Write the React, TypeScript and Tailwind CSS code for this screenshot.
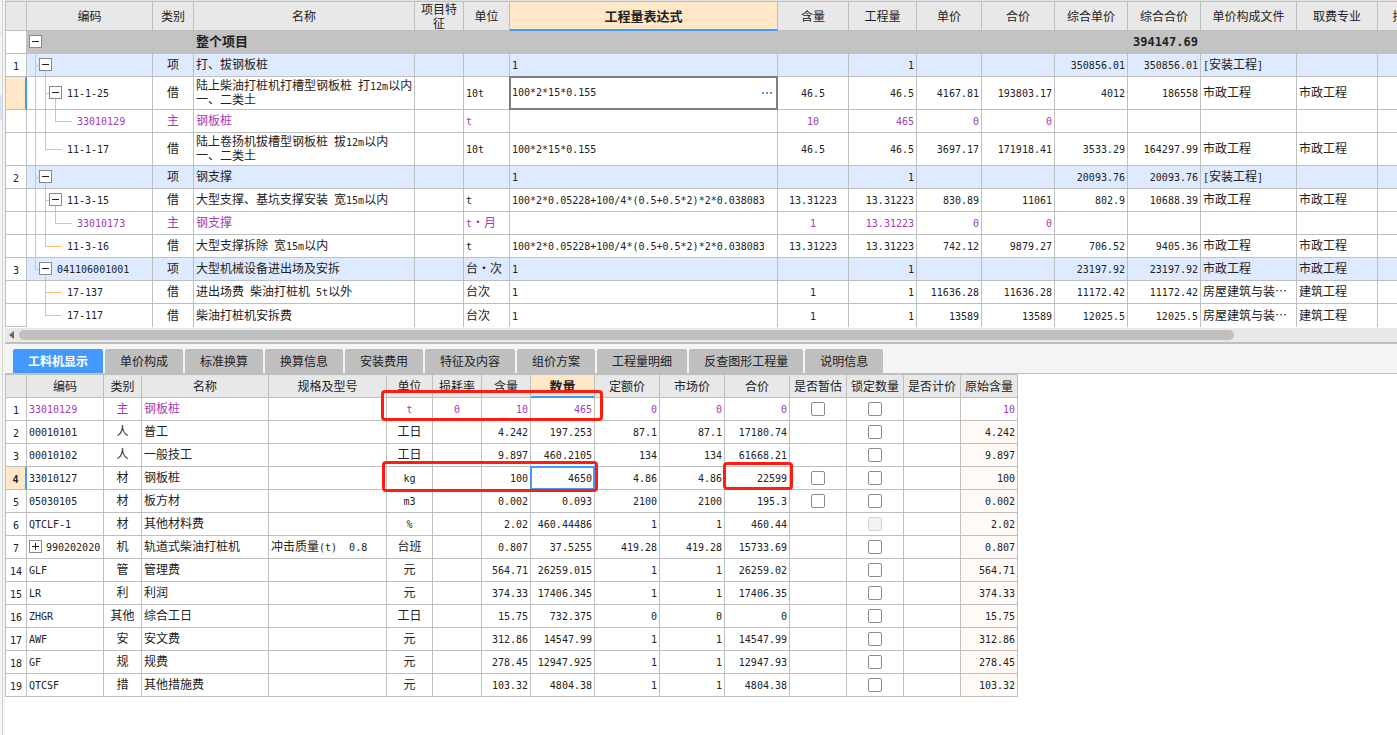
import React from 'react';
import clsx from 'clsx';

interface Column {
  title: string;
  width: string;
  align: string;
  wrap?: boolean;
  active?: boolean;
}

type Guide = 'pass' | 'tee' | 'elbow' | 'none';

interface BudgetRow {
  no: string;
  guides: Guide[];
  open?: boolean;
  code: string;
  kind?: 'root' | 'item' | 'main';
  tall?: boolean;
  current?: boolean;
  // One entry for each column after the code column
  cells: string[];
}

interface ResourceRow {
  no: string;
  code: string;
  main?: boolean;
  current?: boolean;
  expandable?: boolean;
  cells: string[];
  estimate?: boolean;
  lock: 'on' | 'disabled';
  original: string;
}

const budgetColumns: Column[] = [
  { title: '', width: 'w-[21px]', align: 'text-center' },
  { title: '编码', width: 'w-[126px]', align: 'text-left' },
  { title: '类别', width: 'w-[41px]', align: 'text-center' },
  { title: '名称', width: 'w-[221px]', align: 'text-left', wrap: true },
  { title: '项目特征', width: 'w-[49px]', align: 'text-left' },
  { title: '单位', width: 'w-[46px]', align: 'text-left' },
  { title: '工程量表达式', width: 'w-[268px]', align: 'text-left', active: true },
  { title: '含量', width: 'w-[71px]', align: 'text-center' },
  { title: '工程量', width: 'w-[68px]', align: 'text-right' },
  { title: '单价', width: 'w-[65px]', align: 'text-right' },
  { title: '合价', width: 'w-[73px]', align: 'text-right' },
  { title: '综合单价', width: 'w-[73px]', align: 'text-right' },
  { title: '综合合价', width: 'w-[73px]', align: 'text-right' },
  { title: '单价构成文件', width: 'w-[96px]', align: 'text-left' },
  { title: '取费专业', width: 'w-[81px]', align: 'text-left' },
  { title: '措施类别', width: 'w-[78px]', align: 'text-left' },
];

const budgetRows: BudgetRow[] = [
  { no: '', guides: [], open: true, code: '', kind: 'root', cells: ['', '整个项目', '', '', '', '', '', '', '', '', '394147.69', '', '', ''] },
  { no: '1', guides: ['tee'], open: true, code: '', kind: 'item', cells: ['项', '打、拔钢板桩', '', '', '1', '', '1', '', '', '350856.01', '350856.01', '[安装工程]', '', ''] },
  { no: '', guides: ['pass', 'tee'], open: true, code: '11-1-25', tall: true, current: true, cells: ['借', '陆上柴油打桩机打槽型钢板桩 打12m以内一、二类土', '', '10t', '100*2*15*0.155', '46.5', '46.5', '4167.81', '193803.17', '4012', '186558', '市政工程', '市政工程', ''] },
  { no: '', guides: ['pass', 'pass', 'elbow'], code: '33010129', kind: 'main', cells: ['主', '钢板桩', '', 't', '', '10', '465', '0', '0', '', '', '', '', ''] },
  { no: '', guides: ['pass', 'elbow'], code: '11-1-17', tall: true, cells: ['借', '陆上卷扬机拔槽型钢板桩 拔12m以内\n一、二类土', '', '10t', '100*2*15*0.155', '46.5', '46.5', '3697.17', '171918.41', '3533.29', '164297.99', '市政工程', '市政工程', ''] },
  { no: '2', guides: ['tee'], open: true, code: '', kind: 'item', cells: ['项', '钢支撑', '', '', '1', '', '1', '', '', '20093.76', '20093.76', '[安装工程]', '', ''] },
  { no: '', guides: ['pass', 'tee'], open: true, code: '11-3-15', cells: ['借', '大型支撑、基坑支撑安装 宽15m以内', '', 't', '100*2*0.05228+100/4*(0.5+0.5*2)*2*0.038083', '13.31223', '13.31223', '830.89', '11061', '802.9', '10688.39', '市政工程', '市政工程', ''] },
  { no: '', guides: ['pass', 'pass', 'elbow'], code: '33010173', kind: 'main', cells: ['主', '钢支撑', '', 't・月', '', '1', '13.31223', '0', '0', '', '', '', '', ''] },
  { no: '', guides: ['pass', 'elbow'], code: '11-3-16', cells: ['借', '大型支撑拆除 宽15m以内', '', 't', '100*2*0.05228+100/4*(0.5+0.5*2)*2*0.038083', '13.31223', '13.31223', '742.12', '9879.27', '706.52', '9405.36', '市政工程', '市政工程', ''] },
  { no: '3', guides: ['elbow'], open: true, code: '041106001001', kind: 'item', cells: ['项', '大型机械设备进出场及安拆', '', '台・次', '1', '', '1', '', '', '23197.92', '23197.92', '市政工程', '市政工程', ''] },
  { no: '', guides: ['none', 'tee'], code: '17-137', cells: ['借', '进出场费 柴油打桩机 5t以外', '', '台次', '1', '1', '1', '11636.28', '11636.28', '11172.42', '11172.42', '房屋建筑与装⋯', '建筑工程', ''] },
  { no: '', guides: ['none', 'elbow'], code: '17-117', cells: ['借', '柴油打桩机安拆费', '', '台次', '1', '1', '1', '13589', '13589', '12025.5', '12025.5', '房屋建筑与装⋯', '建筑工程', ''] },
];

const tabs = ['工料机显示', '单价构成', '标准换算', '换算信息', '安装费用', '特征及内容', '组价方案', '工程量明细', '反查图形工程量', '说明信息'];

const resourceColumns: Column[] = [
  { title: '', width: 'w-[21px]', align: 'text-center' },
  { title: '编码', width: 'w-[77px]', align: 'text-left' },
  { title: '类别', width: 'w-[38px]', align: 'text-center' },
  { title: '名称', width: 'w-[127px]', align: 'text-left' },
  { title: '规格及型号', width: 'w-[118px]', align: 'text-left' },
  { title: '单位', width: 'w-[46px]', align: 'text-center' },
  { title: '损耗率', width: 'w-[49px]', align: 'text-center' },
  { title: '含量', width: 'w-[49px]', align: 'text-right' },
  { title: '数量', width: 'w-[64px]', align: 'text-right', active: true },
  { title: '定额价', width: 'w-[65px]', align: 'text-right' },
  { title: '市场价', width: 'w-[65px]', align: 'text-right' },
  { title: '合价', width: 'w-[65px]', align: 'text-right' },
  { title: '是否暂估', width: 'w-[57px]', align: 'text-center' },
  { title: '锁定数量', width: 'w-[57px]', align: 'text-center' },
  { title: '是否计价', width: 'w-[57px]', align: 'text-center' },
  { title: '原始含量', width: 'w-[57px]', align: 'text-right' },
];

const resourceRows: ResourceRow[] = [
  { no: '1', code: '33010129', main: true, cells: ['主', '钢板桩', '', 't', '0', '10', '465', '0', '0', '0'], estimate: true, lock: 'on', original: '10' },
  { no: '2', code: '00010101', cells: ['人', '普工', '', '工日', '', '4.242', '197.253', '87.1', '87.1', '17180.74'], lock: 'on', original: '4.242' },
  { no: '3', code: '00010102', cells: ['人', '一般技工', '', '工日', '', '9.897', '460.2105', '134', '134', '61668.21'], lock: 'on', original: '9.897' },
  { no: '4', code: '33010127', current: true, cells: ['材', '钢板桩', '', 'kg', '', '100', '4650', '4.86', '4.86', '22599'], estimate: true, lock: 'on', original: '100' },
  { no: '5', code: '05030105', cells: ['材', '板方材', '', 'm3', '', '0.002', '0.093', '2100', '2100', '195.3'], estimate: true, lock: 'on', original: '0.002' },
  { no: '6', code: 'QTCLF-1', cells: ['材', '其他材料费', '', '%', '', '2.02', '460.44486', '1', '1', '460.44'], lock: 'disabled', original: '2.02' },
  { no: '7', code: '990202020', expandable: true, cells: ['机', '轨道式柴油打桩机', '冲击质量(t)  0.8', '台班', '', '0.807', '37.5255', '419.28', '419.28', '15733.69'], lock: 'on', original: '0.807' },
  { no: '14', code: 'GLF', cells: ['管', '管理费', '', '元', '', '564.71', '26259.015', '1', '1', '26259.02'], lock: 'on', original: '564.71' },
  { no: '15', code: 'LR', cells: ['利', '利润', '', '元', '', '374.33', '17406.345', '1', '1', '17406.35'], lock: 'on', original: '374.33' },
  { no: '16', code: 'ZHGR', cells: ['其他', '综合工日', '', '工日', '', '15.75', '732.375', '0', '0', '0'], lock: 'on', original: '15.75' },
  { no: '17', code: 'AWF', cells: ['安', '安文费', '', '元', '', '312.86', '14547.99', '1', '1', '14547.99'], lock: 'on', original: '312.86' },
  { no: '18', code: 'GF', cells: ['规', '规费', '', '元', '', '278.45', '12947.925', '1', '1', '12947.93'], lock: 'on', original: '278.45' },
  { no: '19', code: 'QTCSF', cells: ['措', '其他措施费', '', '元', '', '103.32', '4804.38', '1', '1', '4804.38'], lock: 'on', original: '103.32' },
];

const latin = "font-['DejaVu_Sans_Mono',monospace]";

// Latin runs are set half as wide as a Chinese character, so mixed text keeps to the grid
const Mixed: React.FC<{ text: string; large?: boolean }> = ({ text, large }) => (
  <>
    {text.split(/([\x20-\x7e]+)/).filter(Boolean).map((run, i) =>
      /^[\x20-\x7e]+$/.test(run) ? (
        <span key={i} className={clsx(latin, 'leading-[10px]', large ? 'text-[12px]' : 'text-[10px]')}>{run}</span>
      ) : (
        run
      )
    )}
  </>
);

const ToggleBox: React.FC<{ open?: boolean; label: string }> = ({ open, label }) => (
  <button
    aria-label={label}
    aria-expanded={!!open}
    className="flex size-[13px] shrink-0 items-center justify-center border border-[#8a8a8a] bg-white"
  >
    <svg width="7" height="7" viewBox="0 0 7 7" stroke="#222" fill="none">
      <path d={open ? 'M0 3.5H7' : 'M0 3.5H7M3.5 0V7'} />
    </svg>
  </button>
);

const guidePath = (guide: Guide, h: number) => {
  const mid = Math.floor(h / 2) + 0.5;
  if (guide === 'pass') return `M6.5 0V${h}`;
  if (guide === 'tee') return `M6.5 0V${h}M6.5 ${mid}H10`;
  if (guide === 'elbow') return `M6.5 0V${mid}H10`;
  return '';
};

const TreeCell: React.FC<{ row: BudgetRow }> = ({ row }) => {
  const h = row.tall ? 33 : 23;
  const mid = Math.floor(h / 2) + 0.5;
  return (
    <div className={clsx('flex items-start pl-0.5', row.tall ? 'h-8' : 'h-[22px]')}>
      {row.guides.map((guide, i) => (
        <svg key={i} width="10" height={h} className="shrink-0" stroke="#ffbf69" fill="none" shapeRendering="crispEdges">
          <path d={guidePath(guide, h)} />
        </svg>
      ))}
      {row.open ? (
        <div className="flex h-full flex-col">
          <div className={row.tall ? 'h-[9px]' : 'h-1'} />
          <ToggleBox open label={`折叠 ${row.code}`} />
          <div className="-mb-px ml-1.5 w-px flex-1 bg-[#ffbf69]" />
        </div>
      ) : (
        <svg width="13" height={h} className="shrink-0" stroke="#ffbf69" shapeRendering="crispEdges">
          <path d={`M0 ${mid}H13`} />
        </svg>
      )}
      <span className="ml-[5px] self-center pb-0.5"><Mixed text={row.code} /></span>
    </div>
  );
};

const HeaderRow: React.FC<{ columns: Column[]; height: string }> = ({ columns, height }) => (
  <thead>
    <tr>
      {columns.map((col, i) => (
        <th
          key={i}
          className={clsx(
            'border-r border-[#bfbfbf] px-1 py-0 text-center',
            height,
            col.active
              ? 'border-b-2 border-b-[#4499ff] bg-[#ffe7c8] text-[13px] font-bold'
              : 'border-b bg-[#e8e8e8] font-normal'
          )}
        >
          {col.title}
        </th>
      ))}
    </tr>
  </thead>
);

const ColGroup: React.FC<{ columns: Column[] }> = ({ columns }) => (
  <colgroup>
    {columns.map((col, i) => (
      <col key={i} className={col.width} />
    ))}
  </colgroup>
);

const RowNumber: React.FC<{ no: string; current?: boolean }> = ({ no, current }) => (
  <td
    className={clsx(
      'border-b border-[#bfbfbf] p-0 text-center',
      current ? 'border-r-2 border-r-[#4499ff] bg-[#ffe7c8] font-bold' : 'border-r bg-white'
    )}
  >
    <Mixed text={no} />
  </td>
);

const BudgetGrid: React.FC = () => (
  <div className="overflow-hidden bg-white pb-px">
    <table className="w-full table-fixed border-separate border-spacing-0 border-l border-t border-[#bfbfbf]">
      <ColGroup columns={budgetColumns} />
      <HeaderRow columns={budgetColumns} height="h-[29px]" />
      <tbody>
        {budgetRows.map((row, r) => {
          const last = r === budgetRows.length - 1;
          const cell = clsx('border-r border-r-[#bfbfbf]', last ? '' : 'border-b border-b-[#bfbfbf]');
          return (
            <tr
              key={r}
              className={clsx(
                row.tall ? 'h-[33px]' : 'h-[23px]',
                row.kind === 'root' && 'bg-[#c3c3c3] text-[13px] font-bold',
                row.kind === 'item' && 'bg-[#deeaff]',
                row.kind === 'main' && 'text-[#a33bb5]'
              )}
            >
              <RowNumber no={row.no} current={row.current} />
              <td className={clsx(cell, 'overflow-hidden p-0 align-top')}><TreeCell row={row} /></td>
              {row.cells.map((text, c) => {
                const col = budgetColumns[c + 2];
                if (row.current && col.active) {
                  return (
                    <td key={c} className={clsx(cell, 'relative p-0')}>
                      <div className="absolute -inset-px flex items-center border-2 border-[#7f7f7f] bg-white">
                        <input
                          aria-label={col.title}
                          defaultValue={text}
                          className={clsx(latin, 'min-w-0 flex-1 pl-px text-[10px] outline-none')}
                        />
                        <button aria-label="编辑表达式" className="flex h-full w-[18px] items-center justify-center">
                          <svg width="10" height="2" fill="#5b9bd0">
                            <path d="M0 0h2v2H0zM4 0h2v2H4zM8 0h2v2H8z" />
                          </svg>
                        </button>
                      </div>
                    </td>
                  );
                }
                return (
                  <td
                    key={c}
                    className={clsx(
                      cell,
                      'overflow-hidden pt-0 pb-0.5 pl-0.5',
                      col.align,
                      col.align === 'text-left' ? 'pr-0' : 'pr-0.5',
                      col.wrap ? 'whitespace-pre-wrap' : 'whitespace-nowrap'
                    )}
                  >
                    <Mixed text={text} large={row.kind === 'root'} />
                  </td>
                );
              })}
            </tr>
          );
        })}
      </tbody>
    </table>
  </div>
);

const ScrollBar: React.FC = () => (
  <div className="flex h-[14px] items-center bg-[#e8e8e8] pl-1">
    <svg width="5" height="8" viewBox="0 0 5 8" fill="#666">
      <path d="M5 0V8L0 4Z" />
    </svg>
    <div className="ml-[5px] flex-1 pr-[163px]">
      <div className="h-2.5 rounded-full bg-[#bfbfbf]" />
    </div>
  </div>
);

const TabBar: React.FC = () => (
  <div role="tablist" className="flex gap-0.5 border-b border-t-2 border-[#bfbfbf] bg-[#f4f4f4] pl-2 pt-[5px]">
    {tabs.map((tab, i) => (
      <button
        key={tab}
        role="tab"
        aria-selected={i === 0}
        className={clsx(
          'h-6 rounded-t-xs px-[15px] text-center',
          i === 0 ? 'bg-[#4499ff] font-bold text-white' : 'bg-[#bfbfbf]'
        )}
      >
        {tab}
      </button>
    ))}
  </div>
);

const CheckCell: React.FC<{ label: string; shown?: boolean; disabled?: boolean }> = ({ label, shown, disabled }) => (
  <td className="border-b border-r border-[#bfbfbf] p-0">
    {shown && (
      <input
        type="checkbox"
        aria-label={label}
        disabled={disabled}
        className="mx-auto block size-[14px] appearance-none rounded-xs border border-[#8c8c8c] bg-white disabled:border-[#d4d4d4] disabled:bg-[#f2f2f2]"
      />
    )}
  </td>
);

const ResourceGrid: React.FC = () => (
  <div className="relative overflow-hidden">
    <table className="w-px table-fixed border-separate border-spacing-0 border-l border-t border-[#bfbfbf]">
      <ColGroup columns={resourceColumns} />
      <HeaderRow columns={resourceColumns} height="h-[23px]" />
      <tbody>
        {resourceRows.map((row) => (
          <tr key={row.no} className="h-[23px]">
            <RowNumber no={row.no} current={row.current} />
            <td className={clsx('border-b border-r border-[#bfbfbf] pt-0 pb-0.5 pl-0.5 pr-0 whitespace-nowrap', row.main && 'text-[#a33bb5]')}>
              <div className="flex items-center gap-1">
                {row.expandable && <ToggleBox label={`展开 ${row.code}`} />}
                <span><Mixed text={row.code} /></span>
              </div>
            </td>
            {row.cells.map((text, c) => {
              const col = resourceColumns[c + 2];
              return (
                <td
                  key={c}
                  className={clsx(
                    'relative border-b border-r border-[#bfbfbf] pt-0 pb-0.5 pl-0.5 pr-0.5 whitespace-pre',
                    col.align,
                    row.main && 'text-[#a33bb5]'
                  )}
                >
                  <Mixed text={text} />
                  {row.current && col.active && <div className="absolute -inset-px border-2 border-[#4499ff]" />}
                </td>
              );
            })}
            <CheckCell label={`${row.code} 是否暂估`} shown={row.estimate} />
            <CheckCell label={`${row.code} 锁定数量`} shown disabled={row.lock === 'disabled'} />
            <CheckCell label={`${row.code} 是否计价`} />
            <td className={clsx('border-b border-r border-[#bfbfbf] pt-0 pb-0.5 pl-0.5 pr-0.5 text-right', row.main ? 'text-[#a33bb5]' : 'bg-[#fffaf5]')}>
              <Mixed text={row.original} />
            </td>
          </tr>
        ))}
      </tbody>
    </table>

    {/* Review marks drawn over the grid */}
    <div className="pointer-events-none absolute left-[376px] top-4 h-[31px] w-[222px] rounded border-3 border-[#ff1d0f]" />
    <div className="pointer-events-none absolute left-[377px] top-[87px] h-[31px] w-[216px] rounded border-3 border-[#ff1d0f]" />
    <div className="pointer-events-none absolute left-[718px] top-[88px] h-7 w-[70px] rounded border-3 border-[#ff1d0f]" />
  </div>
);

const App: React.FC = () => (
  <div lang="zh-CN" className="flex min-h-screen bg-[#f4f4f4] font-['Noto_Sans_CJK_SC',sans-serif] text-[12px] leading-[14px] text-[#222]">
    {/* Edge of the project tree panel */}
    <div className="mr-0.5 flex w-[3px] shrink-0 flex-col border-r border-[#d4d4d4]">
      <div className="h-[34px] border-b border-[#d4d4d4]" />
      <div className="mt-[61px] h-[25px] bg-[#cce4ff]" />
    </div>
    <main className="flex min-w-0 flex-1 flex-col bg-white">
      <div className="h-px bg-[#e0e0e0]" />
      <BudgetGrid />
      <ScrollBar />
      <TabBar />
      <ResourceGrid />
    </main>
  </div>
);

export default App;
